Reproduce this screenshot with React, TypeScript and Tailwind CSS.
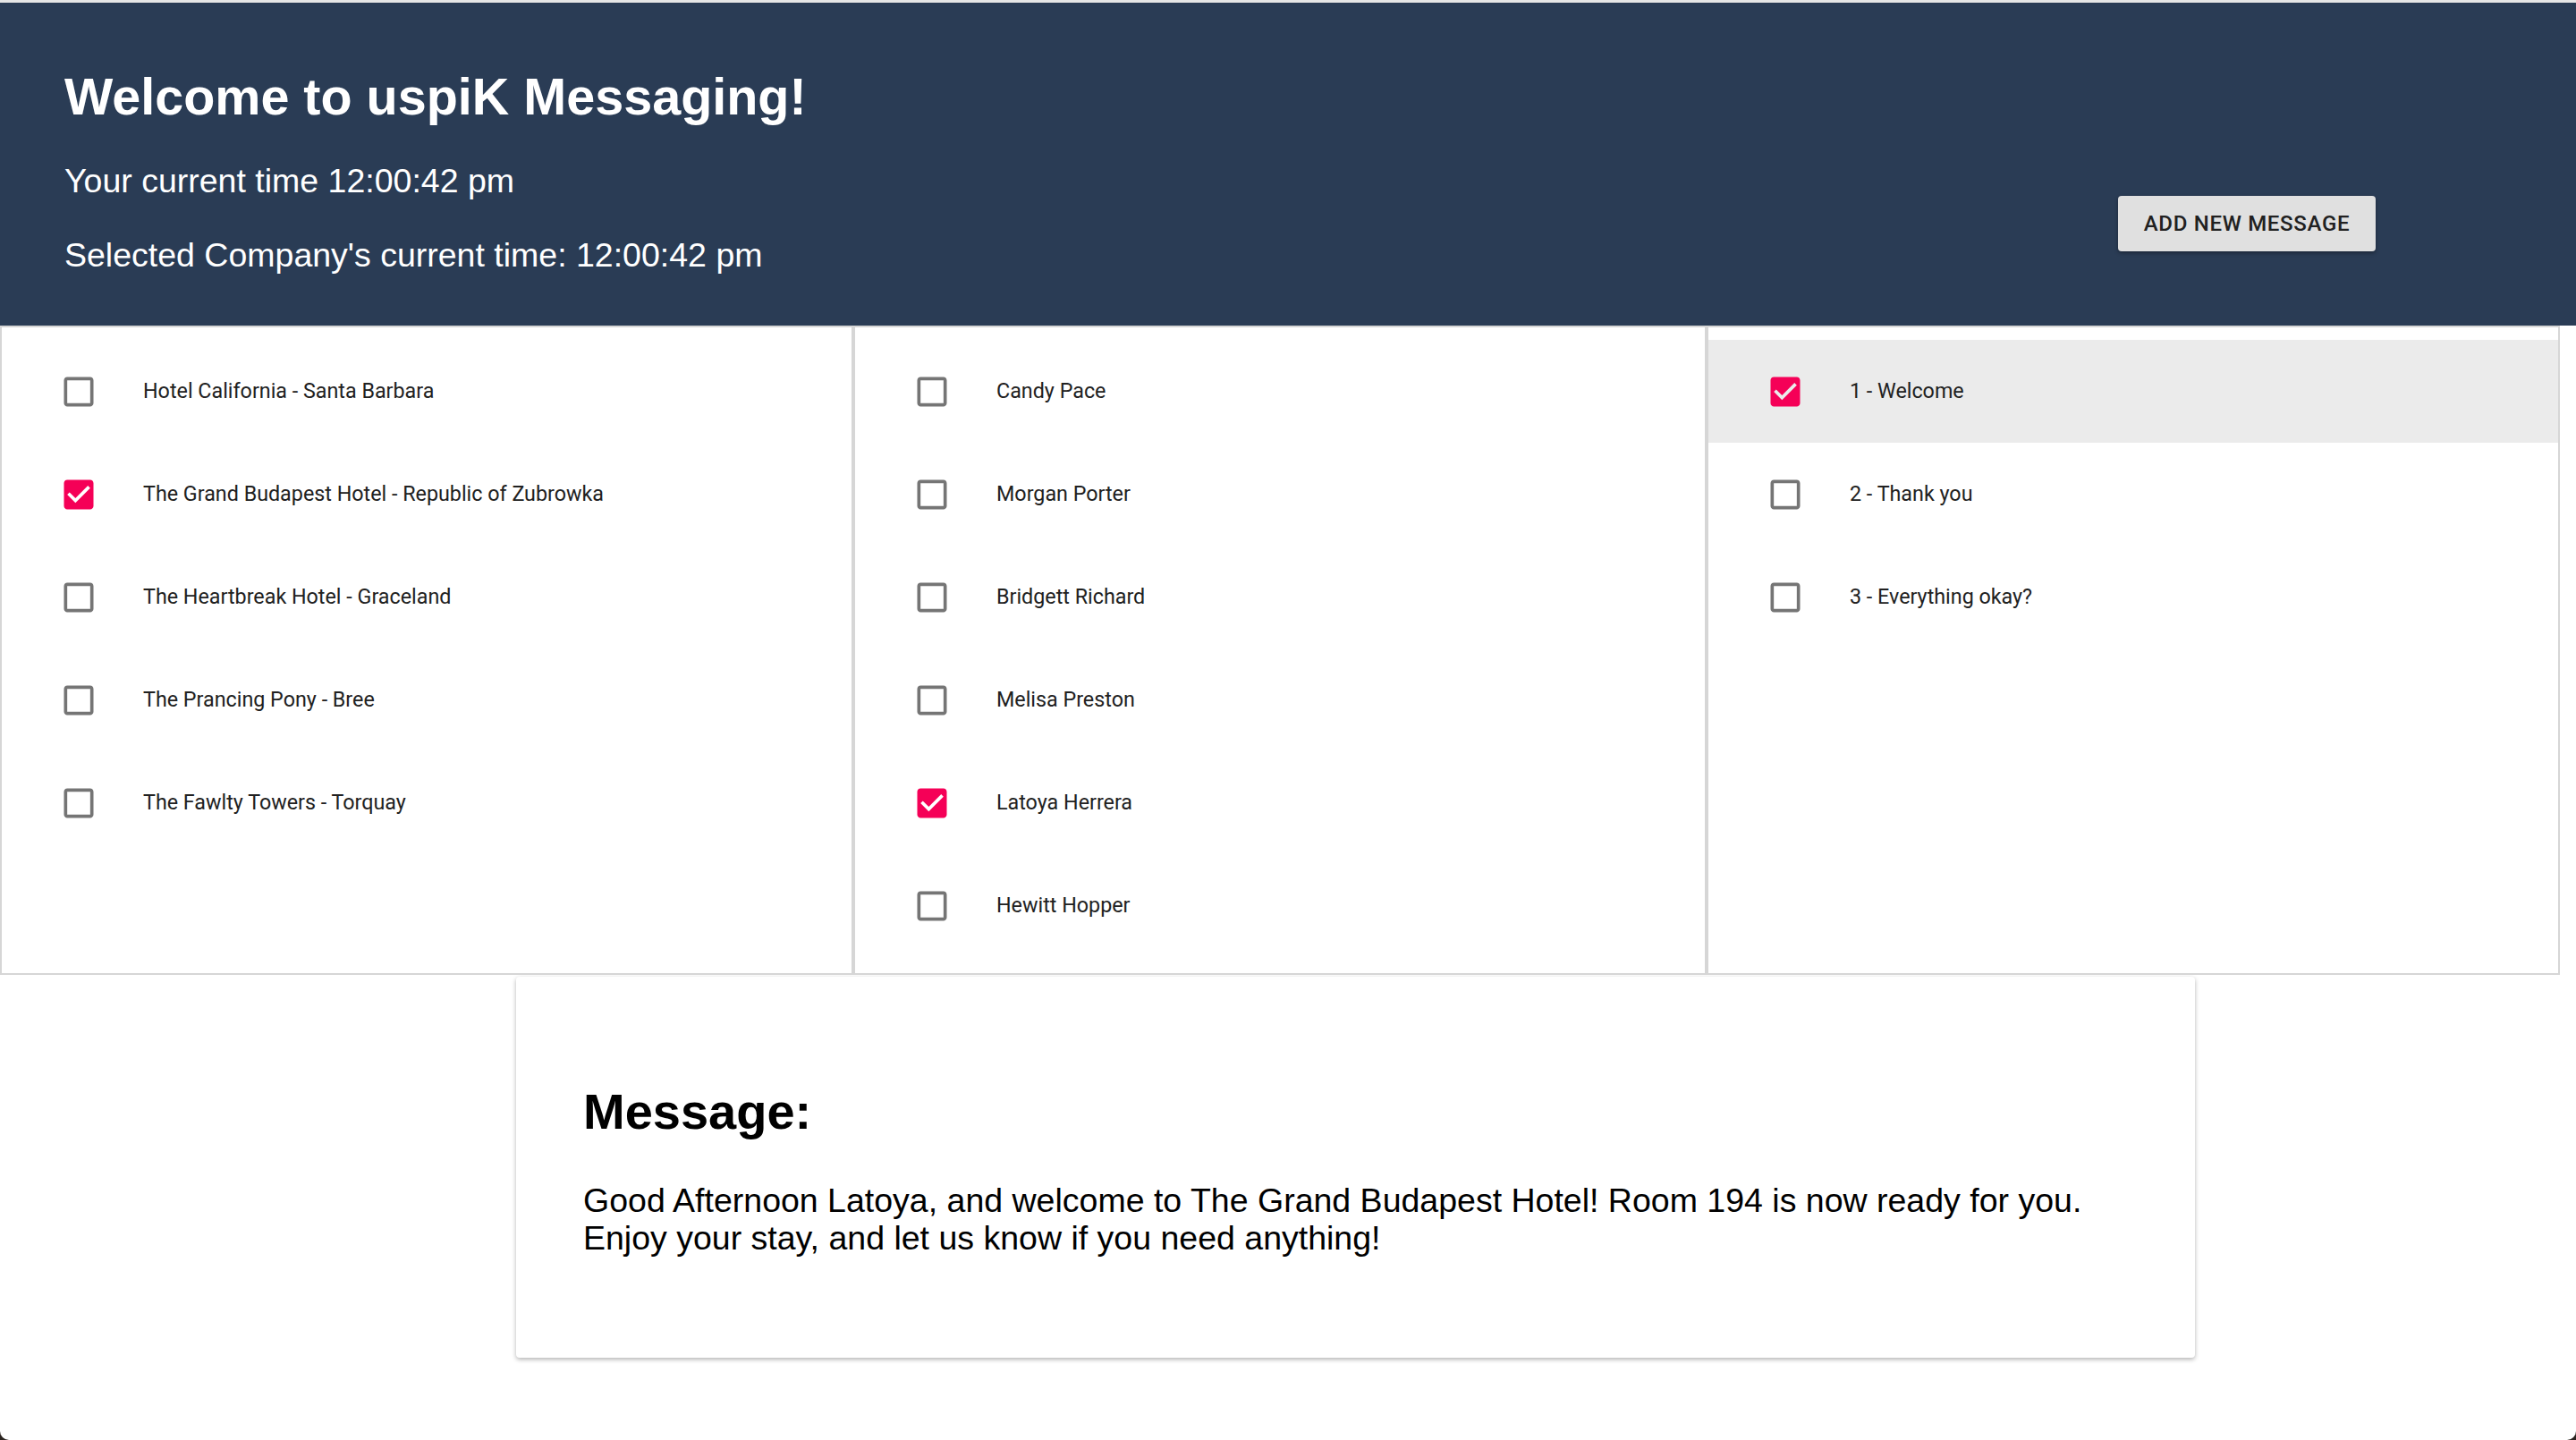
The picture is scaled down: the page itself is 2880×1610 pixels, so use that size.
import React from "react";

const hotels = [
  { label: "Hotel California - Santa Barbara", checked: false },
  { label: "The Grand Budapest Hotel - Republic of Zubrowka", checked: true },
  { label: "The Heartbreak Hotel - Graceland", checked: false },
  { label: "The Prancing Pony - Bree", checked: false },
  { label: "The Fawlty Towers - Torquay", checked: false },
];

const guests = [
  { label: "Candy Pace", checked: false },
  { label: "Morgan Porter", checked: false },
  { label: "Bridgett Richard", checked: false },
  { label: "Melisa Preston", checked: false },
  { label: "Latoya Herrera", checked: true },
  { label: "Hewitt Hopper", checked: false },
];

const templates = [
  { label: "1 - Welcome", checked: true },
  { label: "2 - Thank you", checked: false },
  { label: "3 - Everything okay?", checked: false },
];

const CheckIcon = ({ checked }: { checked: boolean }) =>
  checked ? (
    <svg viewBox="0 0 24 24" className="w-[44px] h-[44px] fill-[#f50057]">
      <path d="M19 3H5c-1.11 0-2 .9-2 2v14c0 1.1.89 2 2 2h14c1.11 0 2-.9 2-2V5c0-1.1-.89-2-2-2zm-9 14l-5-5 1.41-1.41L10 14.17l7.59-7.59L19 8l-9 9z" />
    </svg>
  ) : (
    <svg viewBox="0 0 24 24" className="w-[44px] h-[44px] fill-[#757575]">
      <path d="M19 5v14H5V5h14m0-2H5c-1.1 0-2 .9-2 2v14c0 1.1.9 2 2 2h14c1.1 0 2-.9 2-2V5c0-1.1-.9-2-2-2z" />
    </svg>
  );

const SelectList = ({
  items,
  highlight,
}: {
  items: { label: string; checked: boolean }[];
  highlight?: number;
}) => (
  <div className="border-2 border-[#d6d6d6] pt-[14px] pb-[18px]">
    {items.map((item, i) => (
      <div
        key={item.label}
        className={`flex items-center h-[115px] pl-[64px] ${
          highlight === i ? "bg-[#ebebeb]" : ""
        }`}
      >
        <CheckIcon checked={item.checked} />
        <span className="ml-[50px] text-[23.3px] text-[#212121] font-['Roboto',sans-serif]">
          {item.label}
        </span>
      </div>
    ))}
  </div>
);

export default function App() {
  return (
    <div className="relative min-h-[1610px] bg-white font-['Liberation_Sans',Arial,sans-serif]">
      <div className="h-[3px] bg-[#e6e6e6]" />

      {/* Header */}
      <header className="flex justify-between h-[361px] bg-[#2a3c55] pl-[72px] pr-[224px] text-white">
        <div className="pt-[72px]">
          <h1 className="text-[57.5px] leading-[66px] font-bold">
            Welcome to uspiK Messaging!
          </h1>
          <p className="mt-[40px] text-[37.5px] leading-[42px]">
            Your current time 12:00:42 pm
          </p>
          <p className="mt-[41px] text-[37.5px] leading-[42px]">
            Selected Company's current time: 12:00:42 pm
          </p>
        </div>
        <button className="mt-[216px] h-[62px] w-[288px] rounded-[4px] bg-[#e0e0e0] text-[24px] font-medium tracking-[0.7px] text-[#212121] font-['Roboto',sans-serif] shadow-[0_2px_4px_rgba(0,0,0,0.35)]">
          ADD NEW MESSAGE
        </button>
      </header>

      {/* Lists */}
      <div className="grid grid-cols-3 w-[2862px]">
        <SelectList items={hotels} />
        <SelectList items={guests} />
        <SelectList items={templates} highlight={0} />
      </div>

      {/* Message */}
      <div className="mt-[2px] ml-[577px] w-[1877px] h-[426px] rounded-[4px] bg-white shadow-[0_2px_5px_rgba(0,0,0,0.3)] px-[75px] pt-[119px] text-black">
        <h2 className="text-[56px] leading-[64px] font-bold">Message:</h2>
        <p className="mt-[46px] text-[37.5px] leading-[42px]">
          Good Afternoon Latoya, and welcome to The Grand Budapest Hotel! Room
          194 is now ready for you. Enjoy your stay, and let us know if you
          need anything!
        </p>
      </div>

      {/* window corners */}
      <div className="absolute left-0 bottom-0 w-[10px] h-[10px] bg-[#2b2420]">
        <div className="w-full h-full bg-white rounded-bl-[10px]" />
      </div>
      <div className="absolute right-0 bottom-0 w-[10px] h-[10px] bg-[#2b2420]">
        <div className="w-full h-full bg-white rounded-br-[10px]" />
      </div>
    </div>
  );
}
